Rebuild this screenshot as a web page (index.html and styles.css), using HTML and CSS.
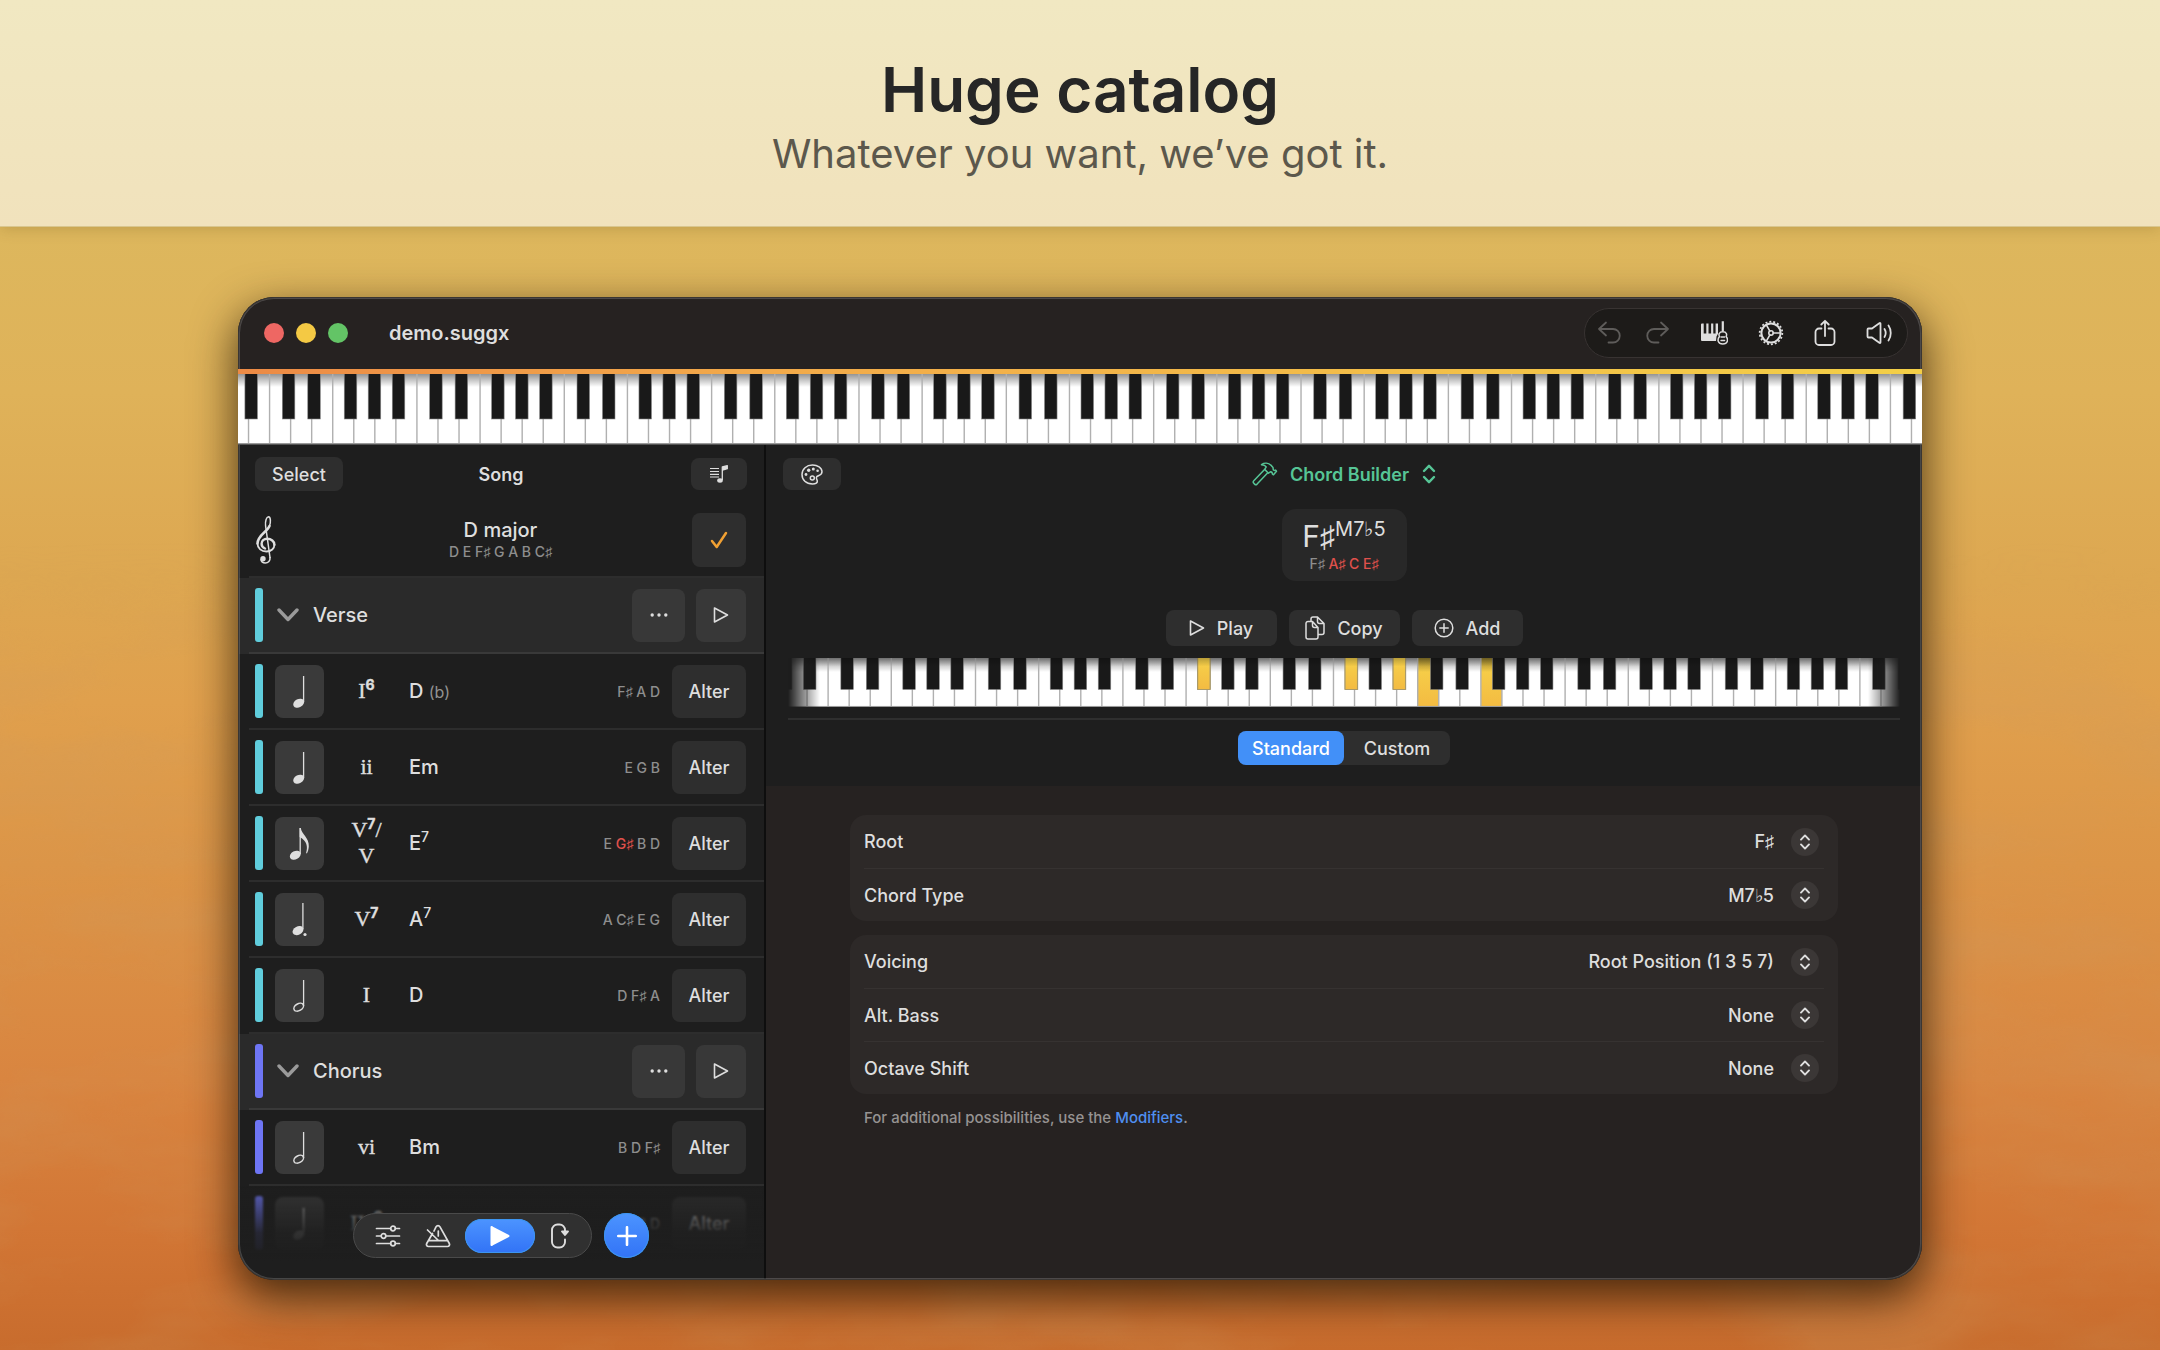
FILE: index.html
```
<!DOCTYPE html>
<html lang="en">
  <head>
    <meta charset="UTF-8" />
    <meta name="viewport" content="width=device-width, initial-scale=1.0" />
    <title>Huge catalog</title>
    <link rel="stylesheet" href="styles.css" />
  </head>
  <body>
    <!-- Shared shapes -->
    <svg class="defs" width="0" height="0" aria-hidden="true">
      <defs>
        <!-- one octave, C to B, white keys are 21 wide -->
        <g id="octave">
          <g fill="#b0b0b0">
            <rect x="-0.7" width="1.4" height="70" />
            <rect x="20.3" width="1.4" height="70" />
            <rect x="41.3" width="1.4" height="70" />
            <rect x="62.3" width="1.4" height="70" />
            <rect x="83.3" width="1.4" height="70" />
            <rect x="104.3" width="1.4" height="70" />
            <rect x="125.3" width="1.4" height="70" />
          </g>
          <g fill="#191919" stroke="#8a8a8a" stroke-width="0.6">
            <rect x="12.7" y="-2" width="12.5" height="47" />
            <rect x="38.1" y="-2" width="12.5" height="47" />
            <rect x="74.5" y="-2" width="12.5" height="47" />
            <rect x="98.4" y="-2" width="12.5" height="47" />
            <rect x="122.4" y="-2" width="12.5" height="47" />
          </g>
        </g>
        <linearGradient id="keyShade" x1="0" y1="0" x2="0" y2="1">
          <stop offset="0" stop-color="#000" stop-opacity="0.42" />
          <stop offset="1" stop-color="#000" stop-opacity="0" />
        </linearGradient>
        <linearGradient id="keyLit" x1="0" y1="0" x2="0" y2="1">
          <stop offset="0" stop-color="#f7d34a" />
          <stop offset="1" stop-color="#f3bb42" />
        </linearGradient>

        <symbol id="note-quarter" viewBox="0 0 49 53">
          <ellipse cx="23.7" cy="38.2" rx="5.8" ry="4.1" transform="rotate(-28 23.7 38.2)" fill="currentColor" />
          <path d="M28.6 37V11" stroke="currentColor" stroke-width="1.3" />
        </symbol>
        <symbol id="note-eighth" viewBox="0 0 49 53">
          <ellipse cx="20.3" cy="38.2" rx="5.8" ry="4.1" transform="rotate(-28 20.3 38.2)" fill="currentColor" />
          <path d="M25.2 37V11" stroke="currentColor" stroke-width="1.3" />
          <path d="M24.6 11h1.2c.6 6 8.6 10 8 18.5-.2 3-.9 5-1.9 7l-.8-.4c2-6.5.8-12-6.5-16z" fill="currentColor" />
        </symbol>
        <symbol id="note-dotted" viewBox="0 0 49 53">
          <ellipse cx="23" cy="37.6" rx="5.8" ry="4.1" transform="rotate(-28 23 37.6)" fill="currentColor" />
          <path d="M27.9 36V10" stroke="currentColor" stroke-width="1.3" />
          <circle cx="30" cy="41.5" r="1.6" fill="currentColor" />
        </symbol>
        <symbol id="note-half" viewBox="0 0 49 53">
          <ellipse cx="23.7" cy="38.2" rx="5.2" ry="3.4" transform="rotate(-30 23.7 38.2)" fill="none" stroke="currentColor" stroke-width="1.5" />
          <path d="M28.6 37V11" stroke="currentColor" stroke-width="1.3" />
        </symbol>
        <symbol id="chevron-down" viewBox="0 0 22 14">
          <path d="M2 2l9 9.5L20 2" fill="none" stroke="currentColor" stroke-width="3.4" stroke-linecap="round" stroke-linejoin="round" />
        </symbol>
        <symbol id="play-outline" viewBox="0 0 16 18">
          <path d="M1.5 2v14L14.5 9z" fill="none" stroke="currentColor" stroke-width="1.6" stroke-linejoin="round" />
        </symbol>
        <symbol id="updown" viewBox="0 0 14 20">
          <path d="M2 7l5-5.2L12 7M2 13l5 5.2L12 13" fill="none" stroke="currentColor" stroke-width="2.4" stroke-linecap="round" stroke-linejoin="round" />
        </symbol>
        <symbol id="dots" viewBox="0 0 18 4">
          <g fill="currentColor">
            <circle cx="2.2" cy="2" r="1.7" />
            <circle cx="9" cy="2" r="1.7" />
            <circle cx="15.8" cy="2" r="1.7" />
          </g>
        </symbol>
      </defs>
    </svg>

    <svg class="clouds" preserveAspectRatio="none" viewBox="0 0 2160 1350" aria-hidden="true">
      <defs>
        <filter id="cloudNoise" x="0" y="0" width="100%" height="100%">
          <feTurbulence type="fractalNoise" baseFrequency="0.004 0.011" numOctaves="5" seed="8" />
          <feColorMatrix values="0 0 0 0 0.6  0 0 0 0 0.33  0 0 0 0 0.12  2.4 0 0 0 -0.95" />
        </filter>
        <linearGradient id="cloudFade" x1="0" y1="0" x2="0" y2="1">
          <stop offset="0.4" stop-color="#fff" stop-opacity="0" />
          <stop offset="0.52" stop-color="#fff" stop-opacity="1" />
        </linearGradient>
        <mask id="cloudMask"><rect width="2160" height="1350" fill="url(#cloudFade)" /></mask>
      </defs>
      <g mask="url(#cloudMask)">
        <rect width="2160" height="1350" filter="url(#cloudNoise)" />
      </g>
    </svg>

    <header class="banner">
      <h1>Huge catalog</h1>
      <p>Whatever you want, we’ve got it.</p>
    </header>

    <main class="window">
      <div class="titlebar">
        <div class="lights">
          <button class="light red" aria-label="Close"></button>
          <button class="light yellow" aria-label="Minimize"></button>
          <button class="light green" aria-label="Zoom"></button>
        </div>
        <h2 class="filename">demo.suggx</h2>
        <div class="tools">
          <div class="history">
            <button class="tool" aria-label="Undo">
              <svg width="24" height="24" viewBox="0 0 24 24"><path d="M9 1.5L2 8l7 6.5M2.500 8H16a6.300 6.300 0 010 13.500h-4.500" /></svg>
            </button>
            <button class="tool" aria-label="Redo">
              <svg width="24" height="24" viewBox="0 0 24 24"><path d="M15 1.500L22 8l-7 6.500M21.500 8H8a6.300 6.300 0 000 13.500h4.500" /></svg>
            </button>
          </div>
          <button class="tool" aria-label="Instruments">
            <svg width="28" height="26" viewBox="0 0 28 26">
              <path d="M1 4.500a1 1 0 011-1h1.700v10h2.600v-10h2.200v10h2.600v-10h2.200v10h2.300v-10H18v10.300l-1.500 2.700-.5 4.500H2a1 1 0 01-1-1z" fill="currentColor" stroke="none" />
              <path d="M21.700 1.200h2.200v10h-2.200z" fill="currentColor" stroke="none" />
              <path d="M22.800 11.800c-4 0-4.300 3-3.300 4.800-2.700 3-1.500 7.400 3.300 7.400s6-4.400 3.300-7.400c1-1.800.7-4.800-3.300-4.800z" stroke-width="1.5" />
              <path d="M21 17h3.600M21 20.500h3.600" stroke-width="1.4" />
            </svg>
          </button>
          <button class="tool" aria-label="Settings">
            <svg width="26" height="26" viewBox="0 0 26 26">
              <circle cx="13" cy="13" r="9.600" stroke-width="2" />
              <circle cx="13" cy="13" r="11.300" stroke-width="1.800" stroke-dasharray="1.970 1.970" stroke-linecap="butt" />
              <circle cx="13" cy="13" r="2.200" stroke-width="1.600" />
              <path d="M15.200 13h7.300M11.900 11.100L8.300 4.900M11.900 14.900l-3.600 6.200" stroke-width="1.600" />
            </svg>
          </button>
          <button class="tool" aria-label="Share">
            <svg width="22" height="28" viewBox="0 0 22 28"><path d="M7.500 9.500H5a3.500 3.500 0 00-3.500 3.500v9.500A3.500 3.500 0 005 26h12a3.500 3.500 0 003.500-3.500V13A3.500 3.500 0 0017 9.500h-2.500M11 17V1.800M7.300 5.500L11 1.800l3.700 3.700" /></svg>
          </button>
          <button class="tool" aria-label="Volume">
            <svg width="28" height="24" viewBox="0 0 28 24"><path d="M1.500 8.500v7a1 1 0 001 1H6l7.300 5.300c.7.500 1.200.2 1.200-.6V2.800c0-.8-.5-1.100-1.200-.6L6 7.500H2.500a1 1 0 00-1 1zM18.500 8c1.400 2.300 1.400 5.700 0 8M22.500 4.500c3 4.300 3 10.700 0 15" /></svg>
          </button>
        </div>
      </div>

      <div class="keybed">
        <svg class="keys" viewBox="0 0 1680 70" preserveAspectRatio="none" role="img" aria-label="Keyboard">
          <rect width="1680" height="70" fill="#fff" />
          <rect width="1680" height="13" fill="url(#keyShade)" />
          <use href="#octave" x="-115.5" />
          <use href="#octave" x="31.5" />
          <use href="#octave" x="178.5" />
          <use href="#octave" x="325.5" />
          <use href="#octave" x="472.5" />
          <use href="#octave" x="619.5" />
          <use href="#octave" x="766.5" />
          <use href="#octave" x="913.5" />
          <use href="#octave" x="1060.5" />
          <use href="#octave" x="1207.5" />
          <use href="#octave" x="1354.5" />
          <use href="#octave" x="1501.5" />
          <use href="#octave" x="1648.5" />
          <rect y="69" width="1680" height="1" fill="#9a9a9a" />
        </svg>
      </div>

      <div class="panes">
        <section class="song">
          <div class="bar-row">
            <button class="btn select-btn">Select</button>
            <h3>Song</h3>
            <button class="btn icon-btn" aria-label="Playlist">
              <svg width="20" height="20" viewBox="0 0 20 20">
                <path d="M1 4.500h9M1 7.500h9M1 10.300h9M1 13h9" stroke="currentColor" stroke-width="1.200" />
                <path d="M13.300 16V3l5-1.300v3L13.500 6" fill="currentColor" stroke="currentColor" stroke-width="1.300" stroke-linejoin="round" />
                <ellipse cx="11" cy="16.500" rx="2.800" ry="2.200" fill="currentColor" />
              </svg>
            </button>
          </div>

          <div class="key-row lined">
            <svg class="clef" width="22" height="50" viewBox="0 0 22 50" fill="none" stroke="currentColor" stroke-width="1.500" stroke-linecap="round" aria-hidden="true">
              <path d="M15 42.500L10.600 11C10 5.500 11.500 2 13.500 1.800c2.300.2 2.400 5.700 1 9.200" />
              <path d="M14.500 11C12.500 16.500 2.500 20.500 2.500 28.500" stroke-width="2.500" />
              <path d="M2.500 28.500c0 5 4 8 9 8 4.800 0 7.900-3 7.900-6.800" stroke-width="1.800" />
              <path d="M10 33.500c-2-.8-3.400-2.500-3.400-4.700 0-2.800 2.300-5 5.600-5 4 0 7.200 2.500 7.200 5.900" stroke-width="2.400" />
              <path d="M15 42.500c.4 3.500-1.800 5.500-4.700 5.500-2.500 0-4-1.300-4.300-3.300" />
              <circle cx="8" cy="43.800" r="2.700" fill="currentColor" stroke="none" />
            </svg>
            <div class="key-name">
              <strong>D major</strong>
              <span class="notes">D E F♯ G A B C♯</span>
            </div>
            <button class="btn check-btn" aria-label="Confirm key">
              <svg width="18" height="18" viewBox="0 0 18 18"><path d="M2 10l4.700 6L16 2" fill="none" stroke="currentColor" stroke-width="2.500" stroke-linecap="round" stroke-linejoin="round" /></svg>
            </button>
          </div>

          <div class="list">
            <div class="row part lined verse">
              <span class="strip"></span>
              <svg class="chev" width="22" height="14"><use href="#chevron-down" /></svg>
              <h4>Verse</h4>
              <button class="btn more-btn" aria-label="More"><svg width="18" height="4"><use href="#dots" /></svg></button>
              <button class="btn play-btn" aria-label="Play verse"><svg width="16" height="18"><use href="#play-outline" /></svg></button>
            </div>
            <div class="row lined verse">
              <span class="strip"></span>
              <button class="btn length" aria-label="Quarter note"><svg width="49" height="53"><use href="#note-quarter" /></svg></button>
              <span class="roman">I<sup>6</sup></span>
              <span class="chord">D <small>(b)</small></span>
              <span class="notes">F♯ A D</span>
              <button class="btn alter">Alter</button>
            </div>
            <div class="row lined verse">
              <span class="strip"></span>
              <button class="btn length" aria-label="Quarter note"><svg width="49" height="53"><use href="#note-quarter" /></svg></button>
              <span class="roman">ii</span>
              <span class="chord">Em</span>
              <span class="notes">E G B</span>
              <button class="btn alter">Alter</button>
            </div>
            <div class="row lined verse">
              <span class="strip"></span>
              <button class="btn length" aria-label="Eighth note"><svg width="49" height="53"><use href="#note-eighth" /></svg></button>
              <span class="roman">V<sup>7</sup>/<br />V</span>
              <span class="chord">E<sup>7</sup></span>
              <span class="notes">E <b>G♯</b> B D</span>
              <button class="btn alter">Alter</button>
            </div>
            <div class="row lined verse">
              <span class="strip"></span>
              <button class="btn length" aria-label="Dotted quarter note"><svg width="49" height="53"><use href="#note-dotted" /></svg></button>
              <span class="roman">V<sup>7</sup></span>
              <span class="chord">A<sup>7</sup></span>
              <span class="notes">A C♯ E G</span>
              <button class="btn alter">Alter</button>
            </div>
            <div class="row lined verse">
              <span class="strip"></span>
              <button class="btn length" aria-label="Half note"><svg width="49" height="53"><use href="#note-half" /></svg></button>
              <span class="roman">I</span>
              <span class="chord">D</span>
              <span class="notes">D F♯ A</span>
              <button class="btn alter">Alter</button>
            </div>
            <div class="row part lined chorus">
              <span class="strip"></span>
              <svg class="chev" width="22" height="14"><use href="#chevron-down" /></svg>
              <h4>Chorus</h4>
              <button class="btn more-btn" aria-label="More"><svg width="18" height="4"><use href="#dots" /></svg></button>
              <button class="btn play-btn" aria-label="Play chorus"><svg width="16" height="18"><use href="#play-outline" /></svg></button>
            </div>
            <div class="row lined chorus">
              <span class="strip"></span>
              <button class="btn length" aria-label="Half note"><svg width="49" height="53"><use href="#note-half" /></svg></button>
              <span class="roman">vi</span>
              <span class="chord">Bm</span>
              <span class="notes">B D F♯</span>
              <button class="btn alter">Alter</button>
            </div>
            <div class="row chorus">
              <span class="strip"></span>
              <button class="btn length" aria-label="Quarter note"><svg width="49" height="53"><use href="#note-quarter" /></svg></button>
              <span class="roman">IV<sup>6</sup></span>
              <span class="chord">G</span>
              <span class="notes">B D</span>
              <button class="btn alter">Alter</button>
            </div>
          </div>

          <div class="fade"></div>
          <div class="transport">
            <div class="pill">
              <button aria-label="Mixer">
                <svg width="26" height="22" viewBox="0 0 26 22" fill="none" stroke="currentColor" stroke-width="1.700" stroke-linecap="round">
                  <path d="M1.500 3.500h14M20.500 3.500h4M1.500 11h4.500M11 11h13.500M1.500 18.500h14M20.500 18.500h4" />
                  <circle cx="18" cy="3.500" r="2.300" />
                  <circle cx="8.500" cy="11" r="2.300" />
                  <circle cx="18" cy="18.500" r="2.300" />
                </svg>
              </button>
              <button aria-label="Metronome">
                <svg width="26" height="24" viewBox="0 0 26 24" fill="none" stroke="currentColor" stroke-width="1.700" stroke-linecap="round" stroke-linejoin="round">
                  <path d="M9 7l2-4.200a2.300 2.300 0 014 0L24.300 19.500a2 2 0 01-1.800 3H3.500a2 2 0 01-1.800-3L7.500 9.500M4 16.700h18.500M2.500 6l11 10.500M13.300 7v5" />
                </svg>
              </button>
              <button class="go" aria-label="Play">
                <svg width="20" height="22" viewBox="0 0 20 22"><path d="M1.500 2v18L18.500 11z" fill="#fff" stroke="#fff" stroke-width="2" stroke-linejoin="round" /></svg>
              </button>
              <button aria-label="Loop">
                <svg width="20" height="26" viewBox="0 0 20 26" fill="none" stroke="currentColor" stroke-width="1.900" stroke-linecap="round" stroke-linejoin="round">
                  <path d="M15 16.500V19a5.500 5.500 0 01-5.500 5.500H7.500A5.500 5.500 0 012 19V7a5.500 5.500 0 015.500-5.500H9.500A5.500 5.500 0 0115 7v2" />
                  <path d="M12 8.500h6l-3 3.500z" fill="currentColor" />
                </svg>
              </button>
            </div>
            <button class="plus" aria-label="Add chord">
              <svg width="20" height="20" viewBox="0 0 20 20"><path d="M10 1.200v17.600M1.200 10h17.600" stroke="#fff" stroke-width="2.600" stroke-linecap="round" /></svg>
            </button>
          </div>
        </section>

        <section class="builder">
          <div class="builder-top">
            <div class="bar-row">
              <button class="btn icon-btn" aria-label="Palette">
                <svg width="22" height="21" viewBox="0 0 22 21" fill="none" stroke="currentColor" stroke-width="1.500">
                  <path d="M11.500 1C5.500 1 1 5 1 10.500S5 20 11.500 20c3.500 0 5-1.200 4.800-3-.2-2-1.800-2.700-.6-4.300 1-1.300 5.300-1 5.300-5C21 3.500 16.500 1 11.500 1z" />
                  <circle cx="11.300" cy="14" r="2" />
                  <g fill="currentColor" stroke="none">
                    <circle cx="5" cy="10.500" r="1.400" /><circle cx="7.700" cy="6.300" r="1.700" /><circle cx="12.300" cy="5" r="1.500" /><circle cx="16.600" cy="6.700" r="1.300" />
                  </g>
                </svg>
              </button>
              <label class="mode">
                <svg width="26" height="24" viewBox="0 0 26 24" fill="none" stroke="currentColor" stroke-width="1.500" stroke-linejoin="round">
                  <path d="M12.800 7.300L1.800 18.800a1.800 1.800 0 000 2.500l.8.800a1.800 1.800 0 002.500 0L16 10.500" />
                  <path d="M9.500 2.500c3-2 7-1.800 9.500.7l2 2.300.3 2.300 1 .7 1.200-.4 1 1.200-3 3.500-1.200-1-.2-1.300-1.300-.8-2.300 1.500-3.800-3.800 1.500-2.500c-1-1.600-2.500-2-4.700-2.200z" />
                </svg>
                <select aria-label="Mode"><option>Chord Builder</option></select>
                <svg width="14" height="20"><use href="#updown" /></svg>
              </label>
            </div>

            <div class="chord-card">
              <div class="chord-name">F♯<sup>M7♭5</sup></div>
              <div class="notes">F♯ <b>A♯ C E♯</b></div>
            </div>

            <div class="actions">
              <button class="btn"><svg width="16" height="18"><use href="#play-outline" /></svg>Play</button>
              <button class="btn">
                <svg width="20" height="24" viewBox="0 0 20 24" fill="none" stroke="currentColor" stroke-width="1.500" stroke-linejoin="round">
                  <path d="M3 5.500h4.500l5.500 6V21a2 2 0 01-2 2H3a2 2 0 01-2-2V7.500a2 2 0 012-2zM7.500 5.500v4a2 2 0 002 2H13" />
                  <path d="M6 5.500V3a2 2 0 012-2h4.500L19 7.500v9a2 2 0 01-2 2h-4M12.500 1v4.500a2 2 0 002 2H19" />
                </svg>Copy
              </button>
              <button class="btn">
                <svg width="20" height="20" viewBox="0 0 20 20" fill="none" stroke="currentColor" stroke-width="1.500" stroke-linecap="round">
                  <circle cx="10" cy="10" r="8.800" /><path d="M10 5.800v8.400M5.800 10h8.400" />
                </svg>Add
              </button>
            </div>

            <svg class="keys keys-small" viewBox="0 0 1109 70" preserveAspectRatio="none" role="img" aria-label="Chord on keyboard">
              <rect width="1109" height="70" fill="#fff" />
              <rect x="628" width="21" height="70" fill="url(#keyLit)" />
              <rect x="691" width="21" height="70" fill="url(#keyLit)" />
              <rect width="1109" height="20" fill="url(#keyShade)" />
              <use href="#octave" x="-107" />
              <use href="#octave" x="40" />
              <use href="#octave" x="187" />
              <use href="#octave" x="334" />
              <use href="#octave" x="481" />
              <use href="#octave" x="628" />
              <use href="#octave" x="775" />
              <use href="#octave" x="922" />
              <use href="#octave" x="1069" />
              <g fill="url(#keyLit)" stroke="#a99a6a" stroke-width="1.200">
                <rect x="408.500" y="-2" width="12.500" height="47" />
                <rect x="555.500" y="-2" width="12.500" height="47" />
                <rect x="603.400" y="-2" width="12.500" height="47" />
              </g>
              <rect width="1109" height="12" fill="url(#keyShade)" opacity="0.6" />
              <rect y="68.500" width="1109" height="1.500" fill="#9a9a9a" />
            </svg>
            <hr />

            <div class="segmented">
              <button class="on" aria-pressed="true">Standard</button>
              <button aria-pressed="false">Custom</button>
            </div>
          </div>

          <form class="form">
            <div class="card">
              <div class="field">
                <label for="root">Root</label>
                <select id="root"><option>F♯</option></select>
                <span class="knob"><svg width="12" height="16"><use href="#updown" /></svg></span>
              </div>
              <div class="field">
                <label for="type">Chord Type</label>
                <select id="type"><option>M7♭5</option></select>
                <span class="knob"><svg width="12" height="16"><use href="#updown" /></svg></span>
              </div>
            </div>
            <div class="card">
              <div class="field">
                <label for="voicing">Voicing</label>
                <select id="voicing"><option>Root Position (1 3 5 7)</option></select>
                <span class="knob"><svg width="12" height="16"><use href="#updown" /></svg></span>
              </div>
              <div class="field">
                <label for="bass">Alt. Bass</label>
                <select id="bass"><option>None</option></select>
                <span class="knob"><svg width="12" height="16"><use href="#updown" /></svg></span>
              </div>
              <div class="field">
                <label for="octave-shift">Octave Shift</label>
                <select id="octave-shift"><option>None</option></select>
                <span class="knob"><svg width="12" height="16"><use href="#updown" /></svg></span>
              </div>
            </div>
            <p class="hint">For additional possibilities, use the <a href="#modifiers">Modifiers</a>.</p>
          </form>
        </section>
      </div>
    </main>
  </body>
</html>
```
FILE: styles.css
```
* {
  box-sizing: border-box;
}
body {
  margin: 0;
  min-height: 100vh;
  display: flex;
  flex-direction: column;
  position: relative;
  font-family: "Inter", "Liberation Sans", sans-serif;
  font-size: 18px;
  color: #dedede;
  background: linear-gradient(
    #e2bf66 0%,
    #ddb75d 17%,
    #dfb259 29%,
    #dda751 43%,
    #e0a04d 52%,
    #dc9547 64%,
    #d98540 80%,
    #d27635 91%,
    #c86c2d 100%
  );
}
h1,
h2,
h3,
h4,
p {
  margin: 0;
}
button,
select {
  font: inherit;
  color: inherit;
  border: 0;
  padding: 0;
  background: none;
}
select {
  appearance: none;
}
svg {
  display: block;
  flex: none;
}
.defs {
  position: absolute;
}
.clouds {
  position: absolute;
  inset: 0;
  width: 100%;
  height: 100%;
  opacity: 0.25;
}

/* Banner */
.banner {
  position: relative;
  padding: 50px 20px 48px;
  text-align: center;
  background: linear-gradient(#f1e8c2, #f1e2bc);
  border-bottom: 1px solid #d9c68e;
  box-shadow: 0 2px 14px rgba(80, 60, 10, 0.2);
}
.banner h1 {
  font-size: 62px;
  line-height: 80px;
  font-weight: 600;
  color: #262626;
}
.banner p {
  font-size: 40px;
  line-height: 48px;
  color: #5c584c;
}

/* Window */
.window {
  position: relative;
  flex: 1;
  display: flex;
  flex-direction: column;
  margin: 70px 238px;
  border-radius: 36px;
  overflow: hidden;
  background: #1e1e1e;
  box-shadow: 0 16px 44px 2px rgba(30, 18, 0, 0.75);
}
.window::after {
  content: "";
  position: absolute;
  inset: 0;
  border-radius: 36px;
  box-shadow: inset 0 0 0 1px #3a3633, inset 0 0 0 2px rgba(255, 255, 255, 0.18);
  pointer-events: none;
}
.titlebar {
  display: flex;
  align-items: center;
  height: 72px;
  padding: 0 14px 0 26px;
  background: #262221;
}
.lights {
  display: flex;
  gap: 12px;
}
.light {
  width: 20px;
  height: 20px;
  border-radius: 50%;
}
.red {
  background: #ee6763;
}
.yellow {
  background: #f4c944;
}
.green {
  background: #63c466;
}
.filename {
  flex: 1;
  margin-left: 41px;
  font-size: 20px;
  font-weight: 600;
}
.tools {
  display: flex;
  align-items: center;
  gap: 30px;
  height: 50px;
  padding: 0 13px 0 12px;
  border: 1px solid #383332;
  border-radius: 25px;
  background: #1d1b19;
}
.history {
  display: flex;
  gap: 25px;
  color: #5e5c5a;
}
.tool svg {
  fill: none;
  stroke: currentColor;
  stroke-width: 1.8;
  stroke-linecap: round;
  stroke-linejoin: round;
}
.keybed {
  position: relative;
  z-index: 1;
  padding-top: 5px;
  background: linear-gradient(90deg, #ec8a45, #f2a94a 30%, #f3cf47);
  border-bottom: 1px solid #555;
}
.keys {
  width: 100%;
  height: 70px;
}
.keys-small {
  height: 49px;
  margin-top: 12px;
  mask-image: linear-gradient(90deg, transparent, #000 32px, #000 calc(100% - 32px), transparent);
}

/* Shared pieces */
.panes {
  flex: 1;
  display: flex;
}
.btn {
  display: flex;
  align-items: center;
  justify-content: center;
  border-radius: 8px;
  background: #2e2e2e;
  font-weight: 500;
}
.bar-row {
  display: grid;
  grid-template-columns: 1fr auto 1fr;
  align-items: center;
  height: 34px;
}
.bar-row h3 {
  font-size: 18px;
  font-weight: 600;
}
.icon-btn {
  width: 56px;
  height: 32px;
}
.notes {
  font-size: 14px;
  font-weight: 500;
  color: #8e8e8e;
}
.notes b {
  font-weight: 500;
  color: #e0514c;
}
.lined {
  position: relative;
}
.lined::after {
  content: "";
  position: absolute;
  left: 11px;
  right: 0;
  bottom: 0;
  height: 2px;
  background: rgba(255, 255, 255, 0.07);
}

/* Song pane */
.song {
  position: relative;
  width: 528px;
  padding-top: 12px;
  border-right: 2px solid #0e0e0e;
}
.song .bar-row {
  padding: 0 17px;
}
.select-btn {
  width: 88px;
  height: 34px;
}
.song .icon-btn {
  justify-self: end;
}
.key-row {
  display: grid;
  grid-template-columns: 1fr auto 1fr;
  align-items: center;
  height: 87px;
  padding: 10px 18px 0 17px;
}
.key-name {
  display: flex;
  flex-direction: column;
  align-items: center;
}
.key-name strong {
  font-size: 20px;
  line-height: 24px;
  font-weight: 500;
}
.key-name .notes {
  line-height: 20px;
}
.check-btn {
  justify-self: end;
  width: 54px;
  height: 54px;
  color: #f0a033;
}
.row {
  display: flex;
  align-items: center;
  height: 76px;
  padding: 0 18px 2px 17px;
}
.part {
  background: #2a2a2a;
}
.part .btn {
  background: #383838;
}
.strip {
  width: 8px;
  height: 54px;
  border-radius: 3px;
}
.verse .strip {
  background: #60cddc;
}
.chorus .strip {
  background: #6e75f4;
}
.chev {
  margin-left: 14px;
  color: #9a9a9a;
}
.row h4 {
  flex: 1;
  margin-left: 14px;
  font-size: 20px;
  font-weight: 500;
}
.more-btn {
  width: 53px;
  height: 53px;
  margin-right: 11px;
}
.play-btn {
  width: 50px;
  height: 53px;
}
.length {
  width: 49px;
  height: 53px;
  margin-left: 12px;
  background: #3a3a3a;
}
.roman {
  width: 85px;
  text-align: center;
  font-family: "Liberation Serif", serif;
  font-size: 22px;
  line-height: 26px;
  -webkit-text-stroke: 0.4px currentColor;
}
.row sup {
  font-family: "Inter", sans-serif;
  font-size: 14px;
  line-height: 0;
}
.roman sup {
  font-weight: 700;
}
.chord {
  flex: 1;
  font-size: 20px;
  font-weight: 500;
}
.chord small {
  font-size: 16px;
  font-weight: 400;
  color: #929292;
}
.alter {
  width: 74px;
  height: 53px;
  margin-left: 12px;
}
.fade {
  position: absolute;
  left: 0;
  right: 0;
  bottom: 0;
  height: 94px;
  background: linear-gradient(rgba(30, 30, 30, 0.2), rgba(30, 30, 30, 0.9) 50%, #1e1e1e 80%);
  backdrop-filter: blur(1px);
}
.transport {
  position: absolute;
  left: 0;
  right: 0;
  bottom: 22px;
  display: flex;
  justify-content: center;
  gap: 12px;
}
.pill {
  display: flex;
  align-items: center;
  height: 45px;
  padding: 0 6px 0 9px;
  border: 1px solid #4a4a4a;
  border-radius: 23px;
  background: #303030;
}
.pill button {
  display: flex;
  align-items: center;
  justify-content: center;
  width: 50px;
  height: 34px;
}
.pill .go {
  width: 70px;
  margin-left: 2px;
  border-radius: 17px;
  background: linear-gradient(#4c94ff, #3273f6);
  box-shadow: inset 0 0 0 1px #3d95f0;
}
.plus {
  display: flex;
  align-items: center;
  justify-content: center;
  width: 45px;
  height: 45px;
  border-radius: 50%;
  background: linear-gradient(#4c94ff, #3273f6);
  box-shadow: inset 0 0 0 1px #3d95f0;
}

/* Builder pane */
.builder {
  flex: 1;
  background: #262221;
}
.builder-top {
  display: flex;
  flex-direction: column;
  align-items: center;
  padding: 12px 22px 21px;
  background: #1e1e1e;
}
.builder .bar-row {
  align-self: stretch;
  margin: 0 -5px;
}
.builder .icon-btn {
  width: 58px;
}
.mode {
  display: flex;
  align-items: center;
  gap: 12px;
  color: #56c596;
  font-weight: 600;
}
.chord-card {
  width: 125px;
  height: 72px;
  margin-top: 18px;
  padding-top: 9px;
  border-radius: 14px;
  background: #282828;
  text-align: center;
}
.chord-name {
  font-size: 30px;
  line-height: 36px;
}
.chord-name sup {
  font-size: 20px;
  line-height: 0;
}
.chord-card .notes {
  line-height: 20px;
}
.actions {
  display: flex;
  gap: 12px;
  margin-top: 29px;
}
.actions .btn {
  width: 111px;
  height: 36px;
  gap: 12px;
}
hr {
  width: 100%;
  height: 2px;
  margin: 11px 0;
  border: 0;
  background: #2f2f2f;
}
.segmented {
  display: flex;
  border-radius: 8px;
  background: #2e2e2e;
}
.segmented button {
  width: 106px;
  height: 34px;
  border-radius: 8px;
  font-weight: 500;
}
.segmented .on {
  background: #4290f8;
  color: #fff;
}
.form {
  padding: 29px 84px;
  font-weight: 500;
}
.card {
  margin-bottom: 14px;
  padding: 0 14px;
  border-radius: 16px;
  background: #2d2928;
}
.field {
  display: flex;
  align-items: center;
  height: 53px;
}
.field + .field {
  border-top: 1px solid #363231;
}
.field label {
  flex: 1;
}
.field select {
  text-align-last: right;
}
.knob {
  display: flex;
  align-items: center;
  justify-content: center;
  width: 28px;
  height: 28px;
  margin: 0 5px 0 17px;
  border-radius: 50%;
  background: #3b3736;
  pointer-events: none;
}
.hint {
  padding: 0 14px;
  font-size: 15px;
  line-height: 20px;
  color: #969392;
}
.hint a {
  color: #4f8ff0;
  text-decoration: none;
}
```
